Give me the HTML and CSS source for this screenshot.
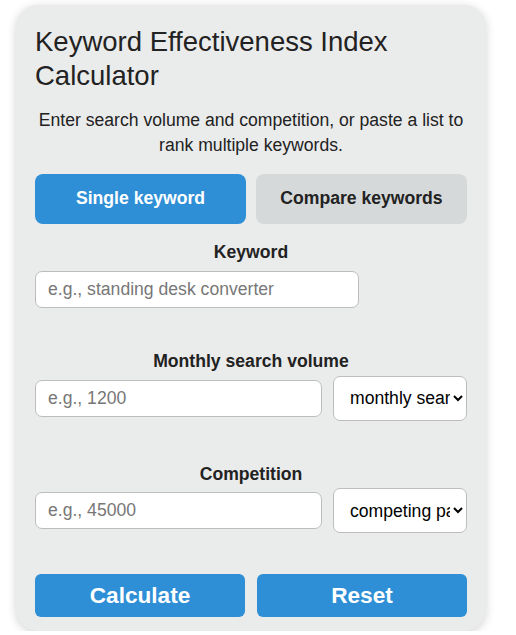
FILE: index.html
```html
<!DOCTYPE html>
<html lang="en">
<head>
    <meta charset="UTF-8">
    <meta name="viewport" content="width=device-width, initial-scale=1.0">
    <title>Keyword Effectiveness Index Calculator</title>
    <link rel="stylesheet" href="styles.css">
</head>
<body>
    <div class="calculator">
        <h1>Keyword Effectiveness Index Calculator</h1>
        <p class="intro">Enter search volume and competition, or paste a list to rank multiple keywords.</p>

        <!-- Modo -->
        <div class="tabs">
            <button class="tab active" type="button">Single keyword</button>
            <button class="tab" type="button">Compare keywords</button>
        </div>

        <form id="singleForm">
            <div class="field">
                <label for="keyword">Keyword</label>
                <input type="text" id="keyword" class="input-short" placeholder="e.g., standing desk converter">
            </div>

            <div class="field">
                <label for="volume">Monthly search volume</label>
                <div class="row">
                    <input type="text" id="volume" placeholder="e.g., 1200">
                    <select id="volumeUnit">
                        <option>monthly searches</option>
                        <option>daily searches</option>
                    </select>
                </div>
            </div>

            <div class="field">
                <label for="competition">Competition</label>
                <div class="row">
                    <input type="text" id="competition" placeholder="e.g., 45000">
                    <select id="competitionUnit">
                        <option>competing pages</option>
                        <option>difficulty score</option>
                    </select>
                </div>
            </div>

            <div class="actions">
                <button type="button" class="btn">Calculate</button>
                <button type="reset" class="btn">Reset</button>
            </div>
        </form>
    </div>
</body>
</html>
```

FILE: styles.css
```css
body {
    font-family: "Liberation Sans", Arial, sans-serif;
    margin: 0;
    padding: 0;
    background-color: #fff;
    color: #222;
}
.calculator {
    width: 432px;
    margin: 5px 0 0 16px;
    padding: 20px 19px 14px;
    background-color: #eaebeb;
    border-radius: 22px;
    box-shadow: 0 2px 10px rgba(0, 0, 0, 0.18);
}
h1 {
    font-size: 27.5px;
    font-weight: normal;
    line-height: 1.23;
    margin: 0;
}
.intro {
    font-size: 17.6px;
    line-height: 1.46;
    text-align: center;
    margin: 15px 0 15px;
}
.tabs {
    display: flex;
    gap: 10px;
}
.tab {
    flex: 1;
    height: 50px;
    border: none;
    border-radius: 8px;
    background-color: #d6d9da;
    color: #222;
    font-family: inherit;
    font-size: 17.6px;
    font-weight: bold;
    cursor: pointer;
}
.tab.active {
    background-color: #2e8fd6;
    color: #fff;
}
#singleForm {
    padding-top: 16px;
}
.field {
    margin-bottom: 41px;
}
.field label {
    display: block;
    text-align: center;
    font-size: 17.6px;
    font-weight: bold;
    line-height: 1.45;
    margin-bottom: 6px;
}
input[type="text"] {
    box-sizing: border-box;
    height: 37px;
    padding: 0 12px;
    border: 1px solid #bdbdbd;
    border-radius: 7px;
    background-color: #fff;
    font-family: inherit;
    font-size: 17.6px;
    color: #222;
}
input::placeholder {
    color: #777;
}
.input-short {
    width: 324px;
}
.row {
    display: flex;
    align-items: center;
    gap: 11px;
    margin-top: -5px;
}
.row input {
    flex: 1;
    min-width: 0;
}
.row select {
    box-sizing: border-box;
    width: 134px;
    height: 45px;
    padding: 0 0 0 12px;
    border: 1px solid #bdbdbd;
    border-radius: 7px;
    background-color: #fff;
    font-family: inherit;
    font-size: 17.6px;
    color: #000;
}
.actions {
    display: flex;
    gap: 12px;
    margin-top: 2px;
}
.btn {
    flex: 1;
    height: 43px;
    border: none;
    border-radius: 6px;
    background-color: #2e8fd6;
    color: #fff;
    font-family: inherit;
    font-size: 22.6px;
    font-weight: bold;
    cursor: pointer;
}
```
